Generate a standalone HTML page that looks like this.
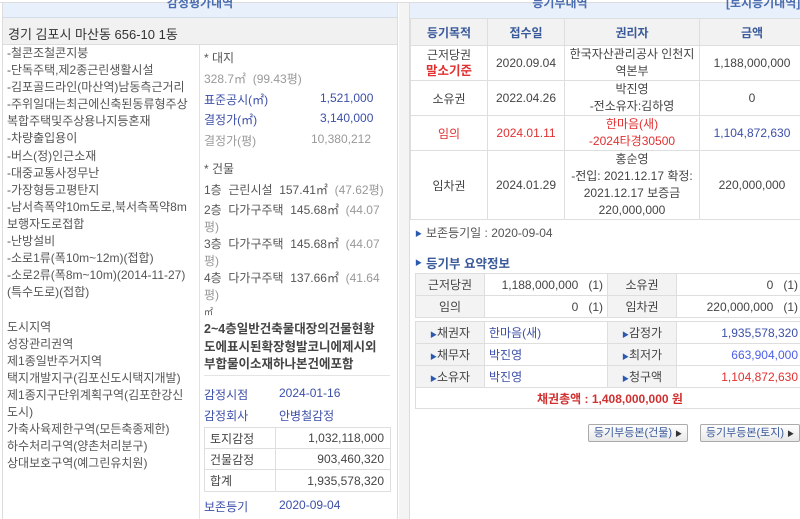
<!DOCTYPE html>
<html><head><meta charset="utf-8"><style>
*{margin:0;padding:0;box-sizing:border-box}
body{width:800px;height:519px;overflow:hidden;background:#fff;font-family:"Liberation Sans","Noto Sans CJK KR",sans-serif;font-size:12px;color:#444;position:relative}
.a{position:absolute;white-space:nowrap}
.b{color:#3c4fa8}
.r{color:#e23030}
.g{color:#999}
table{border-collapse:collapse;position:absolute}
td{border:1px solid #dedede;font-size:12px;color:#444}
</style></head><body>
<div class="a" style="left:0;top:0;width:800px;height:3px;background:#fff;border-bottom:1px solid #ddd"></div>
<div class="a" style="left:2px;top:3px;width:396px;height:516px;border-left:1px solid #dcdcdc;border-right:1px solid #dcdcdc"></div>
<div class="a" style="left:3px;top:3px;width:394px;height:15px;background:#e8f0fb;border-bottom:1px solid #d4dcea"></div>
<div class="a b" style="left:0;width:400px;top:-6px;text-align:center;font-weight:bold;font-size:12px;color:#4a6cb0">감정평가내역</div>
<div class="a" style="left:3px;top:18px;width:394px;height:27px;background:#f1f1f1;border-bottom:1px solid #dcdcdc"></div>
<div class="a" style="left:8px;top:24px;font-size:13px;color:#333">경기 김포시 마산동 656-10 1동</div>
<div class="a" style="left:199px;top:45px;width:1px;height:474px;background:#e2e2e2"></div>
<div class="a" style="left:7px;top:45px;line-height:17.1px;color:#555;font-size:12px">-철콘조철콘지붕<br>-단독주택,제2종근린생활시설<br>-김포골드라인(마산역)남동측근거리<br>-주위일대는최근에신축된동류형주상<br>복합주택및주상용나지등혼재<br>-차량출입용이<br>-버스(정)인근소재<br>-대중교통사정무난<br>-가장형등고평탄지<br>-남서측폭약10m도로,북서측폭약8m<br>보행자도로접합<br>-난방설비<br>-소로1류(폭10m~12m)(접합)<br>-소로2류(폭8m~10m)(2014-11-27)<br>(특수도로)(접합)<br>&nbsp;<br>도시지역<br>성장관리권역<br>제1종일반주거지역<br>택지개발지구(김포신도시택지개발)<br>제1종지구단위계획구역(김포한강신<br>도시)<br>가축사육제한구역(모든축종제한)<br>하수처리구역(양촌처리분구)<br>상대보호구역(예그린유치원)</div>
<div class="a" style="left:204px;top:49px;color:#555">* 대지</div>
<div class="a g" style="left:204px;top:70px">328.7㎡ &nbsp;(99.43평)</div>
<div class="a b" style="left:204px;top:91px">표준공시(㎡)</div><div class="a b" style="left:320px;top:91px;width:51px;text-align:right">1,521,000</div>
<div class="a b" style="left:204px;top:111px">결정가(㎡)</div><div class="a b" style="left:320px;top:111px;width:51px;text-align:right">3,140,000</div>
<div class="a g" style="left:204px;top:132px">결정가(평)</div><div class="a g" style="left:300px;top:132px;width:71px;text-align:right">10,380,212</div>
<div class="a" style="left:204px;top:160px;color:#555">* 건물</div>
<div class="a" style="left:204px;top:181px;color:#555">1층 &nbsp;근린시설 &nbsp;157.41㎡ <span class="g">&nbsp;(47.62평)</span></div>
<div class="a" style="left:204px;top:201px;color:#555">2층 &nbsp;다가구주택 &nbsp;145.68㎡ <span class="g">&nbsp;(44.07</span></div>
<div class="a g" style="left:204px;top:218px">평)</div>
<div class="a" style="left:204px;top:235px;color:#555">3층 &nbsp;다가구주택 &nbsp;145.68㎡ <span class="g">&nbsp;(44.07</span></div>
<div class="a g" style="left:204px;top:252px">평)</div>
<div class="a" style="left:204px;top:269px;color:#555">4층 &nbsp;다가구주택 &nbsp;137.66㎡ <span class="g">&nbsp;(41.64</span></div>
<div class="a g" style="left:204px;top:286px">평)</div>
<div class="a" style="left:204px;top:305px;font-size:9px;color:#555">㎡</div>
<div class="a" style="left:204px;top:321px;line-height:17.5px;font-weight:bold;color:#444;font-size:12.5px">2~4층일반건축물대장의건물현황<br>도에표시된확장형발코니에제시외<br>부합물이소재하나본건에포함</div>
<div class="a" style="left:204px;top:375px;width:186px;height:1px;background:#e4e4e4"></div>
<div class="a b" style="left:204px;top:386px">감정시점</div><div class="a b" style="left:279px;top:386px">2024-01-16</div>
<div class="a b" style="left:204px;top:407px">감정회사</div><div class="a b" style="left:279px;top:407px">안병철감정</div>
<table style="left:204px;top:427px;width:187px">
<tr style="height:21px"><td style="width:71px;padding-left:5px">토지감정</td><td style="text-align:right;padding-right:6px">1,032,118,000</td></tr>
<tr style="height:21px"><td style="padding-left:5px">건물감정</td><td style="text-align:right;padding-right:6px">903,460,320</td></tr>
<tr style="height:22px"><td style="padding-left:5px">합계</td><td style="text-align:right;padding-right:6px">1,935,578,320</td></tr>
</table>
<div class="a b" style="left:204px;top:498px">보존등기</div><div class="a b" style="left:279px;top:498px">2020-09-04</div>
<div class="a" style="left:399px;top:3px;width:10px;height:516px;background:#f4f4f4"></div>
<div class="a" style="left:409px;top:3px;width:391px;height:516px;border-left:1px solid #dcdcdc"></div>
<div class="a" style="left:410px;top:3px;width:390px;height:15px;background:#e8f0fb"></div>
<div class="a" style="left:410px;top:-6px;width:300px;text-align:center;font-weight:bold;color:#4a6cb0">등기부내역</div>
<div class="a" style="left:726px;top:-6px;font-weight:bold;color:#4a6cb0">[토지등기내역]</div>
<table style="left:410px;top:18px;width:395px;text-align:center">
<tr style="height:27px;background:#f2f2f2;font-weight:bold"><td style="width:77px;color:#3a5a9a;font-weight:bold">등기목적</td><td style="width:77px;color:#3a5a9a;font-weight:bold">접수일</td><td style="width:135px;color:#3a5a9a;font-weight:bold">권리자</td><td style="color:#3a5a9a;font-weight:bold">금액</td></tr>
<tr style="height:35px"><td style="line-height:16px">근저당권<br><b class="r" style="font-size:12.5px">말소기준</b></td><td>2020.09.04</td><td style="line-height:17px">한국자산관리공사 인천지<br>역본부</td><td>1,188,000,000</td></tr>
<tr style="height:35px"><td>소유권</td><td>2022.04.26</td><td style="line-height:17px">박진영<br>-전소유자:김하영</td><td>0</td></tr>
<tr style="height:35px" class="r"><td class="r">임의</td><td class="r">2024.01.11</td><td class="r" style="line-height:17px">한마음(새)<br>-2024타경30500</td><td class="b">1,104,872,630</td></tr>
<tr style="height:69px"><td>임차권</td><td>2024.01.29</td><td style="line-height:17px">홍순영<br>-전입: 2021.12.17 확정:<br>2021.12.17 보증금<br>220,000,000</td><td>220,000,000</td></tr>
</table>
<div class="a" style="left:415px;top:229px;font-size:7px;color:#2a5ab0">▶</div>
<div class="a" style="left:426px;top:224px;color:#555">보존등기일 : 2020-09-04</div>
<div class="a" style="left:415px;top:258px;font-size:7px;color:#2a5ab0">▶</div>
<div class="a" style="left:426px;top:253px;font-weight:bold;color:#3a5a9a;font-size:12.5px">등기부 요약정보</div>
<table style="left:415px;top:273px;width:390px;text-align:center">
<tr style="height:22px"><td style="width:69px;background:#f3f3f3">근저당권</td><td style="width:123px;text-align:right;padding-right:4px">1,188,000,000 &nbsp; (1)</td><td style="width:69px;background:#f3f3f3">소유권</td><td style="text-align:right;padding-right:6px">0 &nbsp; (1)</td></tr>
<tr style="height:22px"><td style="background:#f3f3f3">임의</td><td style="text-align:right;padding-right:4px">0 &nbsp; (1)</td><td style="background:#f3f3f3">임차권</td><td style="text-align:right;padding-right:6px">220,000,000 &nbsp; (1)</td></tr>
</table>
<table style="left:415px;top:321px;width:390px;text-align:center">
<tr style="height:22px"><td style="width:69px;background:#f3f3f3"><span style="font-size:7px;color:#2a5ab0">▶</span>채권자</td><td style="width:123px;text-align:left;padding-left:4px" class="b">한마음(새)</td><td style="width:69px;background:#f3f3f3"><span style="font-size:7px;color:#2a5ab0">▶</span>감정가</td><td style="text-align:right;padding-right:6px;color:#3c4fa8">1,935,578,320</td></tr>
<tr style="height:22px"><td style="background:#f3f3f3"><span style="font-size:7px;color:#2a5ab0">▶</span>채무자</td><td style="text-align:left;padding-left:4px" class="b">박진영</td><td style="background:#f3f3f3"><span style="font-size:7px;color:#2a5ab0">▶</span>최저가</td><td style="text-align:right;padding-right:6px;color:#4d5ee8">663,904,000</td></tr>
<tr style="height:22px"><td style="background:#f3f3f3"><span style="font-size:7px;color:#2a5ab0">▶</span>소유자</td><td style="text-align:left;padding-left:4px" class="b">박진영</td><td style="background:#f3f3f3"><span style="font-size:7px;color:#2a5ab0">▶</span>청구액</td><td style="text-align:right;padding-right:6px;color:#e23030">1,104,872,630</td></tr>
<tr style="height:21px"><td colspan="4" style="color:#d03030;font-weight:bold">채권총액 : 1,408,000,000 원</td></tr>
</table>
<div class="a" style="left:588px;top:424px;width:100px;height:18px;border:1px solid #aaa;border-radius:2px;background:linear-gradient(#fff,#e8e8e8);font-size:11px;color:#3a5a9a;text-align:center;line-height:16px">등기부등본(건물) <span style="font-size:7px;color:#333">▶</span></div>
<div class="a" style="left:700px;top:424px;width:100px;height:18px;border:1px solid #aaa;border-radius:2px;background:linear-gradient(#fff,#e8e8e8);font-size:11px;color:#3a5a9a;text-align:center;line-height:16px">등기부등본(토지) <span style="font-size:7px;color:#333">▶</span></div>
</body></html>
